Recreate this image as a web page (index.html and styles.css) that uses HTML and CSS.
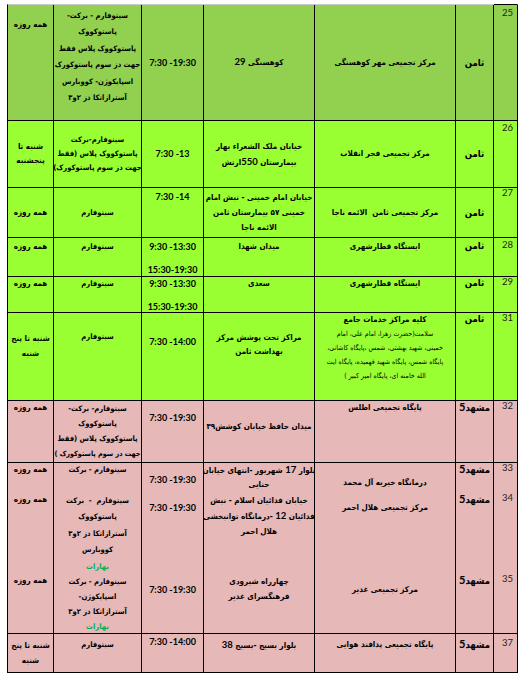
FILE: index.html
```html
<!DOCTYPE html>
<html lang="fa">
<head>
<meta charset="utf-8">
<link rel="stylesheet" href="styles.css">
</head>
<body>
<div class="sheet">
  <div class="row olive r25">
    <div class="c num p3">25</div>
    <div class="c reg mid">ثامن</div>
    <div class="c name mid">مرکز تجمیعی مهر کوهسنگی</div>
    <div class="c addr mid"><div>کوهسنگی <b class="d">29</b></div></div>
    <div class="c hrs mid"><span class="t">7:30 -19:30</span></div>
    <div class="c vac p3 lh16"><div>سینوفارم - برکت-</div><div>پاستوکووک</div><div>پاستوکووک پلاس فقط</div><div>جهت دز سوم پاستوکورک</div><div>اسپایکوژن- کووبارس</div><div>آسترازانکا دز ۲و۳</div></div>
    <div class="c days p13">همه روزه</div>
  </div>
  <div class="row lime">
    <div class="c num p2">26</div>
    <div class="c reg mid">ثامن</div>
    <div class="c name mid">مرکز تجمیعی فجر انقلاب</div>
    <div class="c addr mid lh15"><div>خیابان ملک الشعراء بهار</div><div>بیمارستان <b class="d">550</b>ارتش</div></div>
    <div class="c hrs mid"><span class="t">7:30 -13</span></div>
    <div class="c vac mid"><div>سینوفارم-برکت</div><div>پاستوکووک پلاس (فقط</div><div>جهت دز سوم پاستوکورک)</div></div>
    <div class="c days mid"><div>شنبه تا</div><div>پنجشنبه</div></div>
  </div>
  <div class="row lime">
    <div class="c num p0">27</div>
    <div class="c reg mid">ثامن</div>
    <div class="c name mid">مرکز تجمیعی ثامن&nbsp; الائمه ناجا</div>
    <div class="c addr mid lh15"><div>خیابان امام خمینی - نبش امام</div><div>خمینی ۵۷ بیمارستان ثامن</div><div>الائمه ناجا</div></div>
    <div class="c hrs p2"><span class="t">7:30 -14</span></div>
    <div class="c vac mid">سینوفارم</div>
    <div class="c days mid">همه روزه</div>
  </div>
  <div class="row lime">
    <div class="c num p2">28</div>
    <div class="c reg p2">ثامن</div>
    <div class="c name p2">ایستگاه قطارشهری</div>
    <div class="c addr p2">میدان شهدا</div>
    <div class="c hrs p2"><span class="t">9:30 -13:30</span><span class="t gap">15:30-19:30</span></div>
    <div class="c vac p2">سینوفارم</div>
    <div class="c days p2">همه روزه</div>
  </div>
  <div class="row lime">
    <div class="c num p0">29</div>
    <div class="c reg p0">ثامن</div>
    <div class="c name p0">ایستگاه قطارشهری</div>
    <div class="c addr p0">سعدی</div>
    <div class="c hrs p0"><span class="t">9:30 -13:30</span><span class="t gap">15:30-19:30</span></div>
    <div class="c vac p0">سینوفارم</div>
    <div class="c days p0">همه روزه</div>
  </div>
  <div class="row lime">
    <div class="c num p0">31</div>
    <div class="c reg p0">ثامن</div>
    <div class="c name p0"><div>کلیه مراکز خدمات جامع</div><div class="thin">سلامت(حضرت زهرا، امام علی، امام</div><div class="thin">خمینی، شهید بهشتی، شمس ،پایگاه کاشانی،</div><div class="thin">پایگاه شمس، پایگاه شهید فهمیده، پایگاه ایت</div><div class="thin">الله خامنه ای، پایگاه امیر کبیر )</div></div>
    <div class="c addr p18"><div>مراکز تحت پوشش مرکز</div><div>بهداشت ثامن</div></div>
    <div class="c hrs p22"><span class="t">7:30 -14:00</span></div>
    <div class="c vac p17">سینوفارم</div>
    <div class="c days p18 lh15"><div>شنبه تا پنج</div><div>شنبه</div></div>
  </div>
  <div class="row pink">
    <div class="c num p0">32</div>
    <div class="c reg p0"><div>مشهد<b class="d">5</b></div></div>
    <div class="c name p0">پایگاه تجمیعی اطلس</div>
    <div class="c addr p19">میدان حافظ خیابان کوشش۳۹</div>
    <div class="c hrs p10"><span class="t">7:30 -19:30</span></div>
    <div class="c vac p0 lh15"><div>سینوفارم- برکت-</div><div>پاستوکووک</div><div>پاستوکووک پلاس (فقط</div><div class="tight">جهت دز سوم پاستوکورک )</div></div>
    <div class="c days p0">همه روزه</div>
  </div>
  <div class="row pink">
    <div class="c num blk"><div class="s1">33</div><div class="s2">34</div><div class="s3">35</div></div>
    <div class="c reg blk"><div class="s1">مشهد<b class="d">5</b></div><div class="s2">مشهد<b class="d">5</b></div><div class="s3">مشهد<b class="d">5</b></div></div>
    <div class="c name blk"><div class="s1 q13">درمانگاه خیریه آل محمد</div><div class="s2 q8">مرکز تجمیعی هلال احمر</div><div class="s3 q9">مرکز تجمیعی غدیر</div></div>
    <div class="c addr blk"><div class="s1"><div>بلوار <b class="d">17</b> شهریور -انتهای خیابان</div><div>حنایی</div></div><div class="s2 lh15"><div>خیابان فدائیان اسلام - نبش</div><div>فدائیان <b class="d">12</b> -درمانگاه توانبخشی</div><div>هلال احمر</div></div><div class="s3 lh15"><div>چهارراه شیرودی</div><div>فرهنگسرای غدیر</div></div></div>
    <div class="c hrs blk"><div class="s1 q10"><span class="t">7:30 -19:30</span></div><div class="s2 q8"><span class="t">7:30 -19:30</span></div><div class="s3 q9"><span class="t">7:30 -19:30</span></div></div>
    <div class="c vac blk"><div class="s1">سینوفارم - برکت</div><div class="s2 lh16"><div>سینوفارم&nbsp; -&nbsp; برکت</div><div>پاستوکووک</div><div>آسترازانکا دز ۲و۳</div><div>کووبارس</div><div class="grn">بهارات</div></div><div class="s3 lh15"><div>سینوفارم - برکت</div><div>اسپایکوژن-</div><div>آسترازانکا دز ۲و۳</div><div class="grn">بهارات</div></div></div>
    <div class="c days blk"><div class="s1">همه روزه</div><div class="s2">همه روزه</div><div class="s3">همه روزه</div></div>
  </div>
  <div class="row pink">
    <div class="c num p4">37</div>
    <div class="c reg p4"><div>مشهد<b class="d">5</b></div></div>
    <div class="c name p4">پایگاه تجمیعی پدافند هوایی</div>
    <div class="c addr p4"><div>بلوار بسیج -بسیج <b class="d">38</b></div></div>
    <div class="c hrs p1"><span class="t">7:30 -14:00</span></div>
    <div class="c vac p4">سینوفارم</div>
    <div class="c days p4 lh15"><div>شنبه تا پنج</div><div>شنبه</div></div>
  </div>
</div>
</body>
</html>
```

FILE: styles.css
```css
* {
  box-sizing: border-box;
  margin: 0;
  padding: 0;
}

html, body {
  background: #ffffff;
}

body {
  padding: 4px 0 0 7px;
  font-family: Lato, "DejaVu Sans", sans-serif;
  color: #000;
}

.sheet {
  display: grid;
  direction: rtl;
  width: 511px;
  grid-template-columns: 23px 37px 140px 110px 61px 87px 45px;
  grid-template-rows: 115px 66px 49px 38px 35px 87px 61px 170px 38px;
  gap: 1px;
  background: #000;
  border: 1px solid #000;
  border-top-color: #c9c9c9;
}

.row {
  display: contents;
}

.olive { --bg: #92d050; }
.lime { --bg: #99ff33; }
.pink { --bg: #e6b8b7; }

.c {
  background: var(--bg);
  display: flex;
  flex-direction: column;
  align-items: center;
  text-align: center;
  font-family: "DejaVu Sans Condensed", "DejaVu Sans", sans-serif;
  font-stretch: condensed;
  font-size: 8px;
  font-weight: bold;
  line-height: 14px;
  white-space: nowrap;
  overflow: hidden;
}

.r25 .num {
  box-shadow: 0 -1px 0 #000;
}

.mid { justify-content: center; }
.p0 { padding-top: 0; }
.p1 { padding-top: 1px; }
.p2 { padding-top: 2px; }
.p3 { padding-top: 3px; }
.p4 { padding-top: 4px; }
.p10 { padding-top: 10px; }
.p13 { padding-top: 13px; }
.p17 { padding-top: 17px; }
.p18 { padding-top: 18px; }
.p19 { padding-top: 19px; }
.p22 { padding-top: 22px; }

.lh15 { line-height: 15px; }
.lh16 { line-height: 16.4px; }

.vac {
  font-size: 7.6px;
}

.vac .tight {
  font-size: 7.2px;
}

.num {
  align-items: flex-start;
  padding-right: 4px;
  font-family: Lato, sans-serif;
  font-weight: normal;
  font-size: 9.5px;
  color: #222;
  line-height: 10px;
}

.reg {
  font-size: 9.5px;
  line-height: 12px;
}

.d {
  font-family: Lato, sans-serif;
  font-weight: bold;
  font-size: 9.5px;
}

.reg .d {
  font-size: 11px;
}

.hrs .t {
  direction: ltr;
  unicode-bidi: isolate;
  font-family: Lato, sans-serif;
  font-stretch: normal;
  font-size: 9px;
  font-weight: bold;
  line-height: 14px;
}

.hrs .gap {
  margin-top: 9px;
}

.thin {
  font-weight: normal;
  font-size: 7px;
  line-height: 14px;
}

.name .thin:first-of-type {
  margin-top: 4px;
}

.blk {
  padding: 0;
}

.num.blk {
  padding-right: 4px;
}

.s1 { height: 30px; flex: none; }
.s2 { height: 81px; flex: none; }
.s3 { height: 59px; flex: none; }

.q8 { padding-top: 8px; }
.q9 { padding-top: 9px; }
.q10 { padding-top: 10px; }
.q13 { padding-top: 13px; }

.grn {
  color: #00b050;
}
```
